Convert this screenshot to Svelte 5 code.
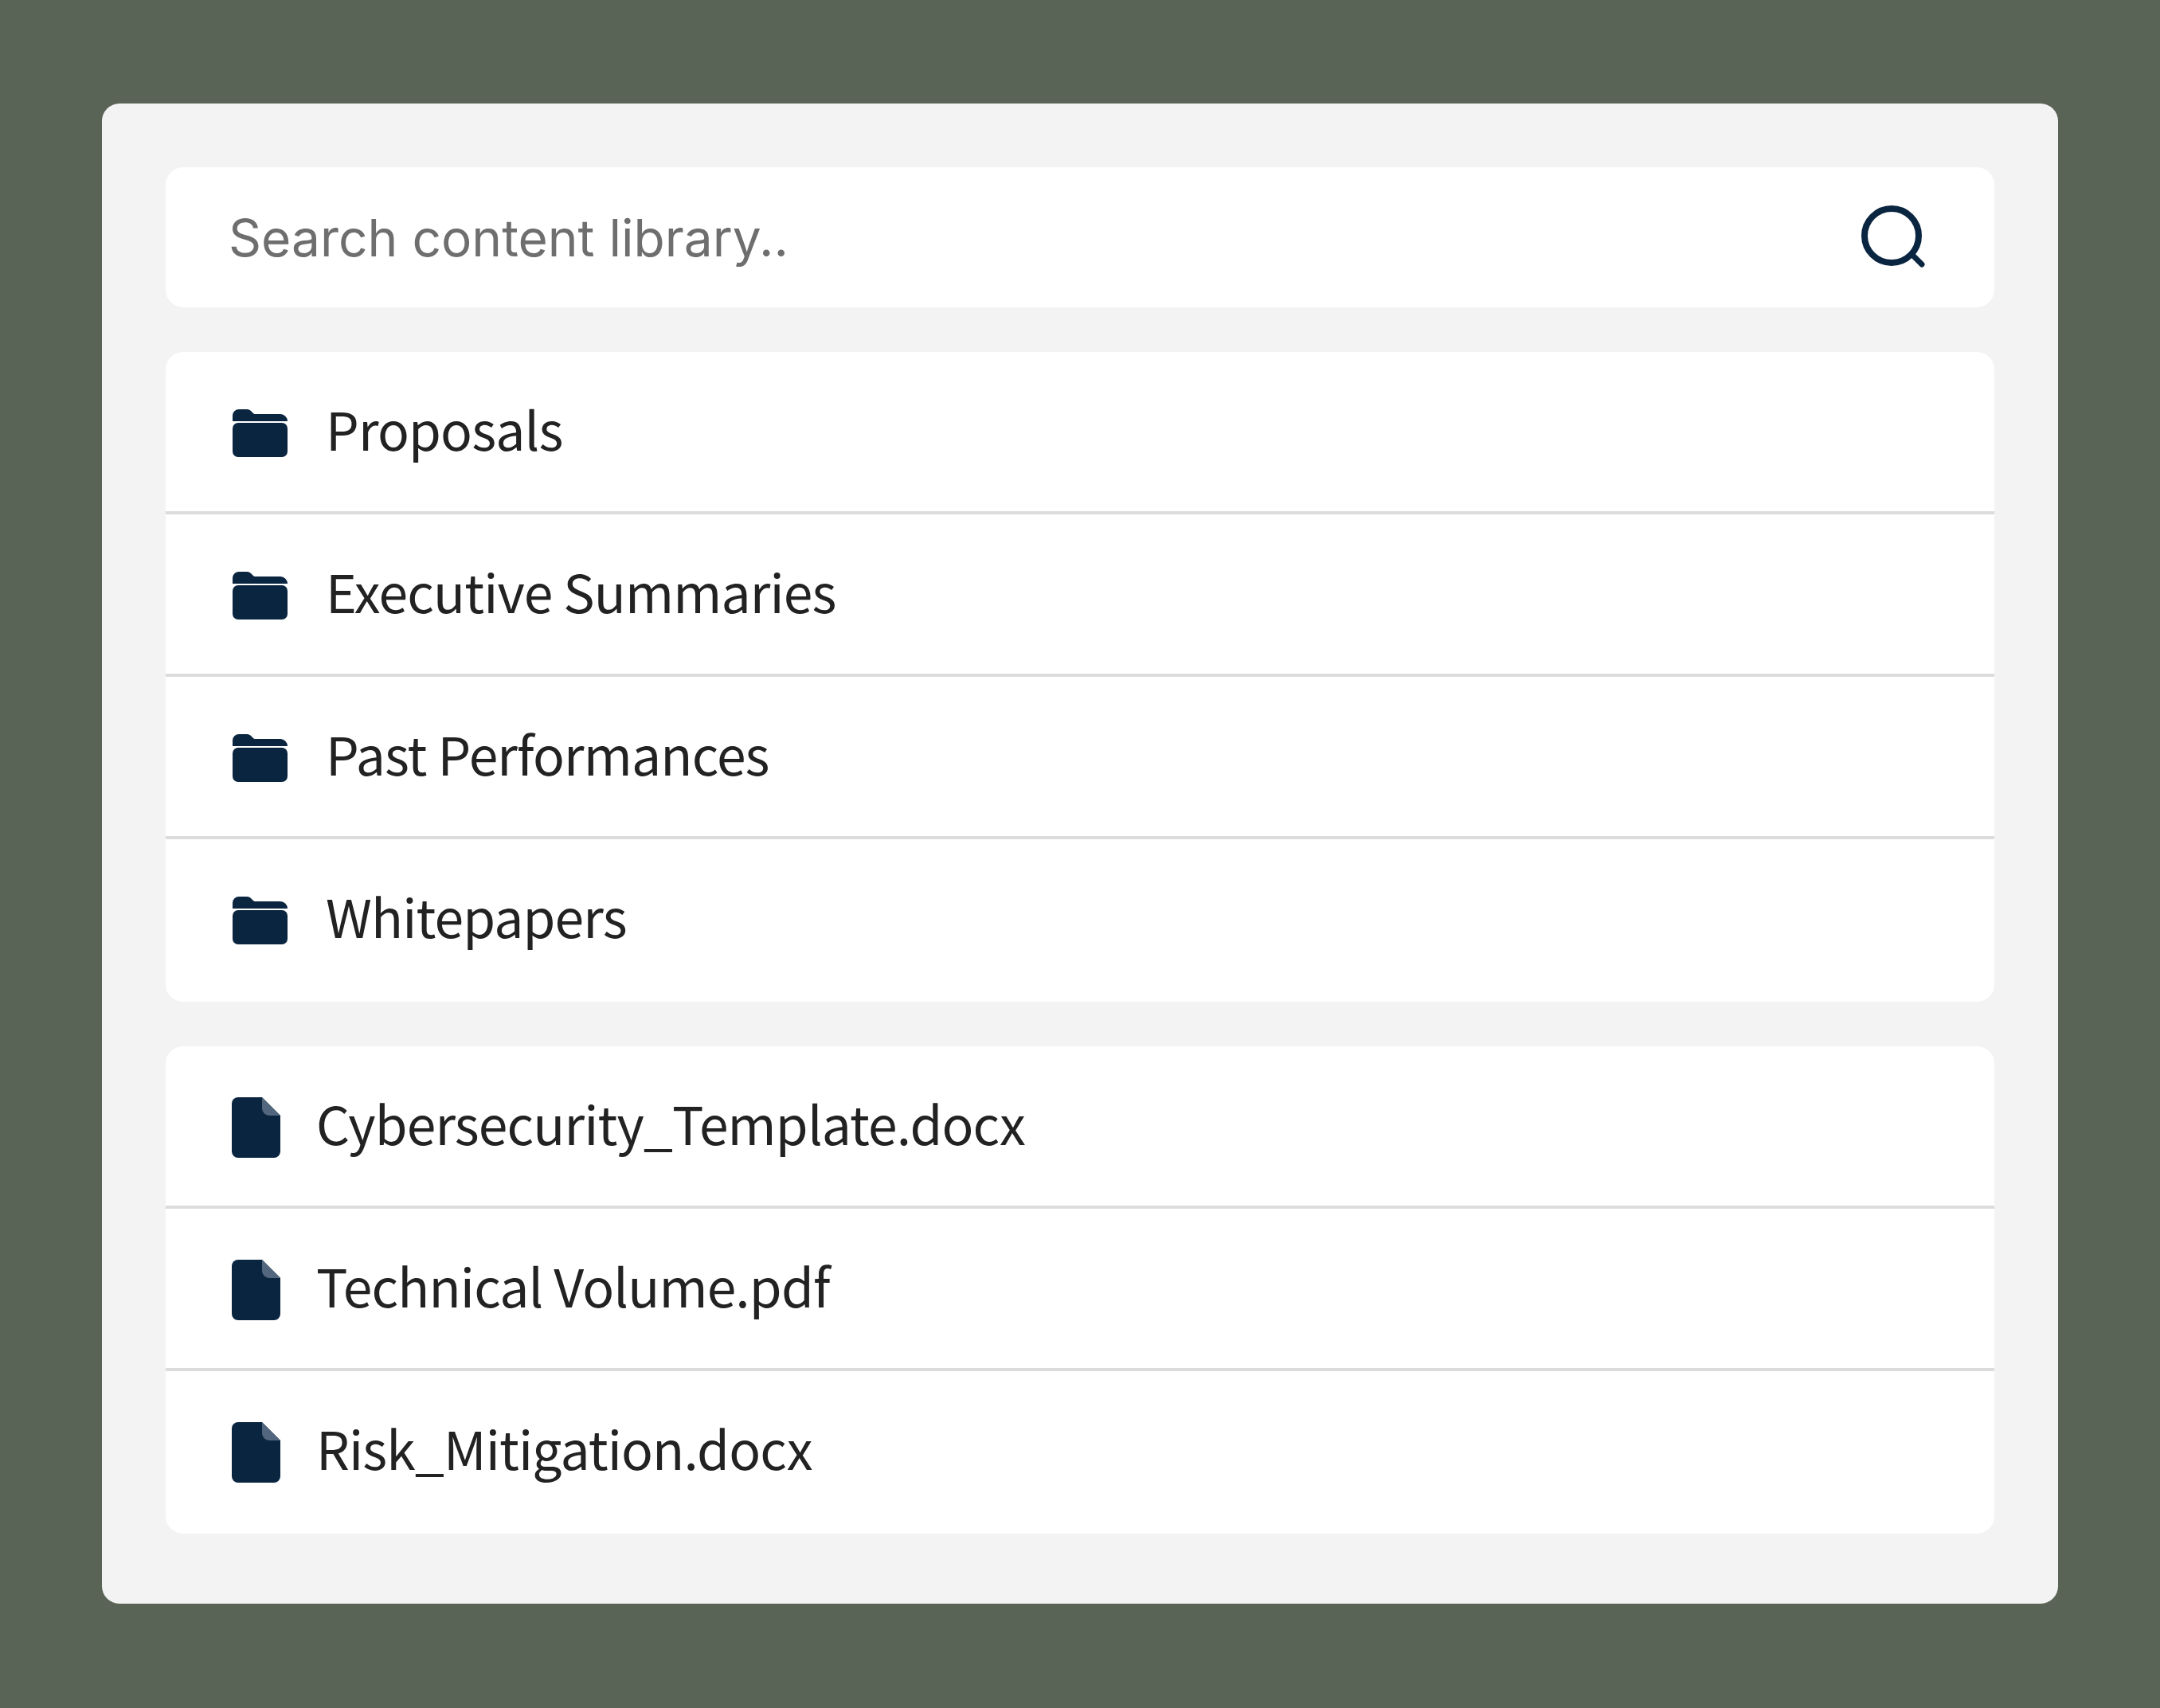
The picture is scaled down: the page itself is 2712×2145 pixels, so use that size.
<script>
    const folders = ["Proposals", "Executive Summaries", "Past Performances", "Whitepapers"];
    const files = ["Cybersecurity_Template.docx", "Technical Volume.pdf", "Risk_Mitigation.docx"];
</script>

<div class="page">
    <div class="panel">
        <div class="search">
            <span class="placeholder">Search content library..</span>
            <svg class="search-icon" viewBox="0 0 80 80" fill="none" stroke="#0a2540" stroke-linecap="round">
                <circle cx="38" cy="38" r="34" stroke-width="8" />
                <path d="M64 62 L76 74" stroke-width="7" />
            </svg>
        </div>

        <div class="list">
            {#each folders as name}
                <div class="row">
                    <svg class="folder" viewBox="0 0 69 60">
                        <path fill="#0a2540" d="M0 15V8a8 8 0 0 1 8-8h10c2.5 0 4 1 5.5 2.5L26 5c.8.8 1.5 1 2.5 1H60a9 9 0 0 1 9 9z" />
                        <rect fill="#0a2540" y="17" width="69" height="43" rx="7" />
                    </svg>
                    <span class="label">{name}</span>
                </div>
            {/each}
        </div>

        <div class="list">
            {#each files as name}
                <div class="row">
                    <svg class="file" viewBox="0 0 61 76">
                        <path fill="#0a2540" d="M8 0h30l23 23v45a8 8 0 0 1-8 8H8a8 8 0 0 1-8-8V8a8 8 0 0 1 8-8z" />
                        <path fill="#52667d" d="M38 0l23 23H47a9 9 0 0 1-9-9z" />
                    </svg>
                    <span class="label">{name}</span>
                </div>
            {/each}
        </div>
    </div>
</div>

<style>
    :global(body) {
        margin: 0;
        background: #5a6456;
    }

    .page {
        box-sizing: border-box;
        height: 2145px;
        padding: 130px 128px;
    }

    .panel {
        box-sizing: border-box;
        height: 1884px;
        padding: 80px;
        background: #f3f3f3;
        border-radius: 22px;
        display: flex;
        flex-direction: column;
        gap: 56px;
    }

    .search {
        height: 176px;
        flex: none;
        box-sizing: border-box;
        padding: 0 87px 0 79px;
        background: #fff;
        border-radius: 22px;
        display: flex;
        align-items: center;
        justify-content: space-between;
    }

    .placeholder {
        font-family: Inter, sans-serif;
        font-size: 64px;
        color: #6e6e6e;
    }

    .search-icon {
        width: 80px;
        height: 80px;
    }

    .list {
        background: #fff;
        border-radius: 22px;
        flex: none;
    }

    .row {
        height: 204px;
        padding-left: 82px;
        display: flex;
        align-items: center;
        box-shadow: inset 0 -4px 0 #dcdcdc;
    }

    .row:last-child {
        box-shadow: none;
    }

    .label {
        font-family: "Noto Sans CJK SC", sans-serif;
        font-size: 66px;
        letter-spacing: -0.87px;
        color: #222;
        padding-bottom: 14px;
    }

    .folder {
        width: 69px;
        height: 60px;
        margin-left: 2px;
        margin-right: 48px;
    }

    .file {
        width: 61px;
        height: 76px;
        margin-left: 1px;
        margin-right: 45px;
    }
</style>
